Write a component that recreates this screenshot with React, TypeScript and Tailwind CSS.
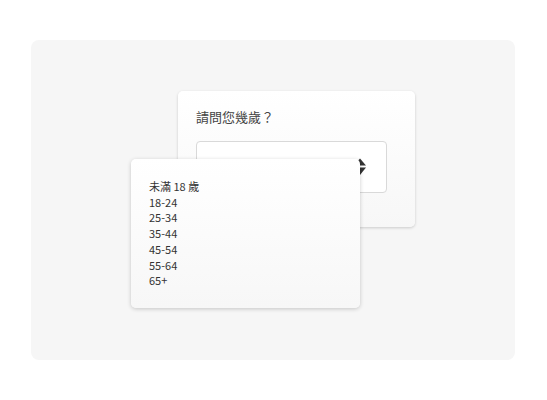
const ages = ['未滿 18 歲', '18-24', '25-34', '35-44', '45-54', '55-64', '65+'];

const SortIcon = () => (
  <svg width="12" height="18" viewBox="0 0 12 18" className="text-[#333]">
    <path d="M6 0.5 L12 7.5 L0 7.5 Z" fill="currentColor" />
    <path d="M0 9.5 L12 9.5 L6 17 Z" fill="currentColor" />
  </svg>
);

export default function App() {
  return (
    <div
      className="w-[547px] h-[400px] bg-white pt-[40px] pl-[31px]"
      style={{ fontFamily: '"Noto Sans CJK TC", "Noto Sans", sans-serif' }}
    >
      <div className="relative w-[484px] h-[320px] rounded-lg bg-[#f6f6f6] pt-[51px] pl-[147px]">
        {/* question card */}
        <div className="w-[237px] h-[136px] rounded-[5px] bg-gradient-to-b from-white to-[#f7f7f7] shadow-[0_1px_3px_rgba(0,0,0,0.18)] pt-[16px] pl-[18px]">
          <p className="text-[13px] leading-[20px] text-[#444]">請問您幾歲？</p>
          <div className="relative mt-[14px] w-[191px] h-[52px] rounded-[4px] border border-[#d9d9d9] bg-white">
            <div className="absolute right-[20px] top-[16px]">
              <SortIcon />
            </div>
          </div>
        </div>

        {/* dropdown list */}
        <div className="absolute left-[100px] top-[119px] w-[229px] h-[149px] rounded-[5px] bg-gradient-to-b from-white to-[#f7f7f7] shadow-[0_1px_4px_rgba(0,0,0,0.2)] pt-[20px] pl-[18px]">
          <ul className="text-[11px] leading-[15.7px] text-[#333]">
            {ages.map(a => (
              <li key={a}>{a}</li>
            ))}
          </ul>
        </div>
      </div>
    </div>
  );
}
